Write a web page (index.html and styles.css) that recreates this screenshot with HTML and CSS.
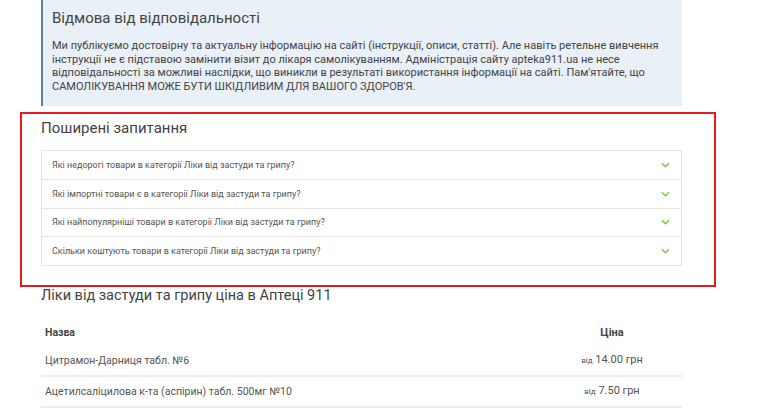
FILE: index.html
```html
<!DOCTYPE html>
<html lang="uk">
<head>
  <meta charset="UTF-8">
  <title>Ліки від застуди та грипу</title>
  <link rel="stylesheet" href="styles.css">
</head>
<body>
  <div class="page">

    <!-- Попередження -->
    <div class="disclaimer">
      <h2>Відмова від відповідальності</h2>
      <p>Ми публікуємо достовірну та актуальну інформацію на сайті (інструкції, описи, статті). Але навіть ретельне вивчення
        інструкції не є підставою замінити візит до лікаря самолікуванням. Адміністрація сайту apteka911.ua не несе
        відповідальності за можливі наслідки, що виникли в результаті використання інформації на сайті. Пам'ятайте, що
        САМОЛІКУВАННЯ МОЖЕ БУТИ ШКІДЛИВИМ ДЛЯ ВАШОГО ЗДОРОВ'Я.</p>
    </div>

    <!-- Поширені запитання -->
    <div class="faq">
      <h3>Поширені запитання</h3>
      <div class="faq-list">
        <div class="faq-item">
          <span>Які недорогі товари в категорії Ліки від застуди та грипу?</span>
          <svg class="chevron" viewBox="0 0 10 6"><polyline points="1,1 5,5 9,1"/></svg>
        </div>
        <div class="faq-item">
          <span>Які імпортні товари є в категорії Ліки від застуди та грипу?</span>
          <svg class="chevron" viewBox="0 0 10 6"><polyline points="1,1 5,5 9,1"/></svg>
        </div>
        <div class="faq-item">
          <span>Які найпопулярніші товари в категорії Ліки від застуди та грипу?</span>
          <svg class="chevron" viewBox="0 0 10 6"><polyline points="1,1 5,5 9,1"/></svg>
        </div>
        <div class="faq-item">
          <span>Скільки коштують товари в категорії Ліки від застуди та грипу?</span>
          <svg class="chevron" viewBox="0 0 10 6"><polyline points="1,1 5,5 9,1"/></svg>
        </div>
      </div>
    </div>

    <!-- Таблиця цін -->
    <div class="prices">
      <h3>Ліки від застуди та грипу ціна в Аптеці 911</h3>
      <table class="price-table">
        <thead>
          <tr>
            <th class="col-name">Назва</th>
            <th class="col-price">Ціна</th>
          </tr>
        </thead>
        <tbody>
          <tr>
            <td class="col-name">Цитрамон-Дарниця табл. №6</td>
            <td class="col-price"><small>від</small> 14.00 грн</td>
          </tr>
          <tr>
            <td class="col-name">Ацетилсаліцилова к-та (аспірин) табл. 500мг №10</td>
            <td class="col-price"><small>від</small> 7.50 грн</td>
          </tr>
        </tbody>
      </table>
    </div>

  </div>
</body>
</html>
```

FILE: styles.css
```css
body {
  margin: 0;
  background: #fff;
  font-family: Roboto, "Liberation Sans", Arial, sans-serif;
  color: #444;
}

.page {
  padding-left: 20px;
}

/* Блок попередження */
.disclaimer {
  width: 641px;
  box-sizing: border-box;
  margin-left: 21px;
  padding: 8px 20px 13px 9px;
  background-color: #e9f0f7;
  border-left: 2px solid #5b80a8;
}
.disclaimer h2 {
  margin: 0 0 11px;
  font-size: 15px;
  font-weight: 400;
  line-height: 20px;
  color: #444;
}
.disclaimer p {
  margin: 0;
  font-size: 11px;
  line-height: 13.5px;
  color: #444;
}

/* Поширені запитання */
.faq {
  width: 696px;
  box-sizing: border-box;
  margin-top: 6px;
  padding: 4px 19px 19px;
  border: 2px solid #e31b23;
}
.faq h3 {
  margin: 0 0 12px;
  font-size: 15px;
  font-weight: 400;
  line-height: 20px;
  color: #444;
}
.faq-list {
  width: 641px;
  box-sizing: border-box;
  border: 1px solid #e4e4e4;
}
.faq-item {
  display: flex;
  align-items: center;
  justify-content: space-between;
  height: 27.75px;
  padding: 0 11px 0 10px;
  font-size: 9px;
  color: #555;
}
.faq-item + .faq-item {
  border-top: 1px solid #e4e4e4;
}
.chevron {
  width: 9px;
  height: 6px;
  fill: none;
  stroke: #7cc443;
  stroke-width: 1.5;
}

/* Ціни */
.prices {
  width: 641px;
  margin-left: 21px;
}
.prices h3 {
  margin: 0;
  font-size: 14.5px;
  font-weight: 400;
  line-height: 18px;
  color: #444;
}
.price-table {
  width: 100%;
  margin-top: 12px;
  border-collapse: collapse;
  font-size: 10.5px;
  color: #555;
}
.price-table th {
  padding: 8px 4px 6px;
  line-height: 15px;
  font-weight: 700;
  color: #444;
}
.price-table td {
  padding: 7px 4px;
  line-height: 14px;
  border-bottom: 2px solid #ececec;
}
.price-table .col-name {
  text-align: left;
}
.price-table .col-price {
  width: 132px;
  text-align: center;
  font-size: 11px;
}
.price-table small {
  font-size: 8px;
}
```
